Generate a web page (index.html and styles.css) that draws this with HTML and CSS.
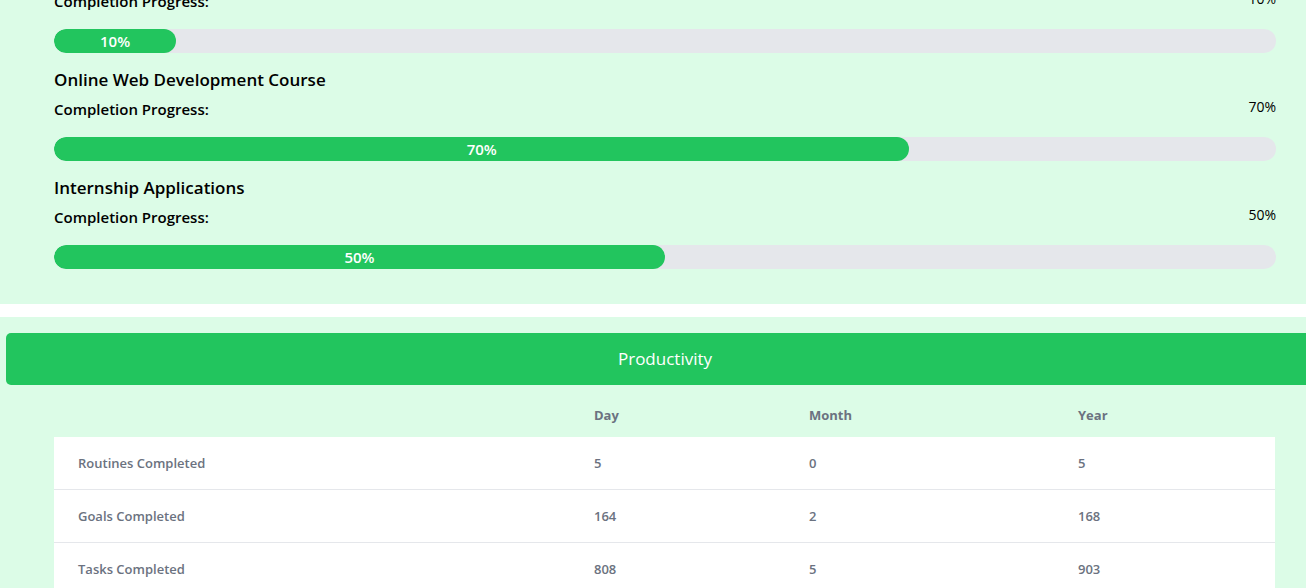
FILE: index.html
```html
<!DOCTYPE html>
<html lang="en">
<head>
<meta charset="utf-8">
<title>Dashboard</title>
<link rel="stylesheet" href="styles.css">
</head>
<body>
<div class="page">
  <section class="goals">
    <div class="goal goal-first">
      <div class="progress-row">
        <span class="progress-label">Completion Progress:</span>
        <span class="progress-value">10%</span>
      </div>
      <div class="track"><div class="fill" style="width:10%">10%</div></div>
    </div>
    <div class="goal">
      <h3 class="goal-title">Online Web Development Course</h3>
      <div class="progress-row">
        <span class="progress-label">Completion Progress:</span>
        <span class="progress-value">70%</span>
      </div>
      <div class="track"><div class="fill" style="width:70%">70%</div></div>
    </div>
    <div class="goal">
      <h3 class="goal-title">Internship Applications</h3>
      <div class="progress-row">
        <span class="progress-label">Completion Progress:</span>
        <span class="progress-value">50%</span>
      </div>
      <div class="track"><div class="fill" style="width:50%">50%</div></div>
    </div>
  </section>
  <section class="productivity">
    <div class="section-header">Productivity</div>
    <table class="stats">
      <thead>
        <tr><th class="c1"></th><th class="c2">Day</th><th class="c3">Month</th><th class="c4">Year</th></tr>
      </thead>
      <tbody>
        <tr><td>Routines Completed</td><td>5</td><td>0</td><td>5</td></tr>
        <tr><td>Goals Completed</td><td>164</td><td>2</td><td>168</td></tr>
        <tr><td>Tasks Completed</td><td>808</td><td>5</td><td>903</td></tr>
      </tbody>
    </table>
  </section>
</div>
</body>
</html>
```
FILE: styles.css
```css
html, body {
  margin: 0;
  padding: 0;
  overflow: hidden;
  background: #ffffff;
}
body {
  font-family: "Open Sans", "Noto Sans", sans-serif;
  color: #000;
}
.page {
  width: 1330px;
}
.goals {
  background: #dcfce7;
  padding: 0 54px 35px;
}
.goal {
  display: flex;
  flex-direction: column;
}
.goal + .goal {
  margin-top: 15px;
}
.goal-first {
  margin-top: -9px;
}
.goal-title {
  margin: 0 0 7px;
  font-size: 17px;
  line-height: 24px;
  font-weight: 600;
}
.progress-row {
  display: flex;
  justify-content: space-between;
  align-items: flex-start;
  height: 20px;
}
.progress-label {
  font-size: 15px;
  line-height: 20px;
  font-weight: 600;
}
.progress-value {
  font-size: 14px;
  line-height: 16px;
  font-weight: 500;
}
.track {
  margin-top: 18px;
  height: 24px;
  background: #e5e7eb;
  border-radius: 12px;
  overflow: hidden;
}
.fill {
  height: 24px;
  background: #22c55e;
  border-radius: 12px;
  color: #fff;
  font-size: 15px;
  font-weight: 600;
  line-height: 24px;
  text-align: center;
}
.productivity {
  margin-top: 13px;
  background: #dcfce7;
  padding: 16px 0 0;
}
.section-header {
  margin: 0 6px;
  height: 52px;
  line-height: 52px;
  background: #22c55e;
  color: #fff;
  border-radius: 5px;
  text-align: center;
  font-size: 17px;
  font-weight: 400;
}
.stats {
  margin: 10px 54px 0;
  width: 1221px;
  border-collapse: collapse;
  font-size: 13px;
  color: #6b7280;
}
.stats th {
  height: 40px;
  padding: 0 24px 2px;
  text-align: left;
  font-weight: 700;
}
.stats .c1 { width: 468px; }
.stats .c2 { width: 167px; }
.stats .c3 { width: 221px; }
.stats td {
  height: 52px;
  padding: 0 24px;
  background: #fff;
  font-weight: 600;
  border-bottom: 1px solid #e5e7eb;
}
```
